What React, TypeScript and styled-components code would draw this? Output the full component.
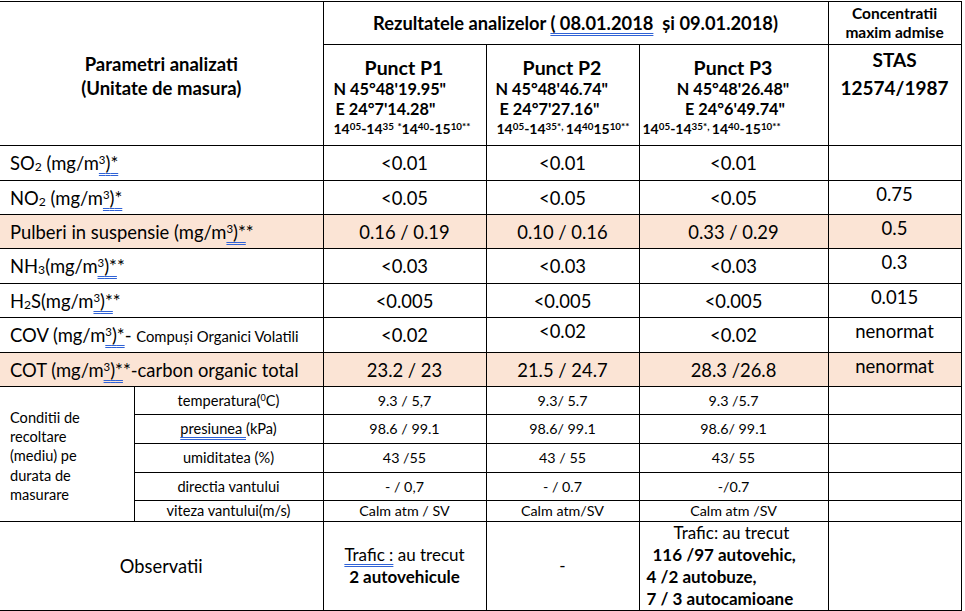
import React from "react";
import styled, { createGlobalStyle } from "styled-components";

const Global = createGlobalStyle`
  html, body { margin: 0; padding: 0; background: #fff; }
  body { font-family: Lato, "Open Sans", sans-serif; color: #000; }
`;

const Table = styled.table`
  border-collapse: collapse;
  table-layout: fixed;
  width: 961px;
  margin-top: 1px;
  font-family: Lato, "Open Sans", sans-serif;
  color: #000;
`;

const Row = styled.tr<{ $h: number }>`
  height: ${(p) => p.$h}px;
`;

type CellProps = {
  $align?: "left" | "center" | "right";
  $valign?: "top" | "middle" | "bottom";
  $bg?: boolean;
  $size?: number;
  $bold?: boolean;
  $pt?: number;
  $pl?: number;
  $first?: boolean;
  $lh?: number;
};

const Cell = styled.td<CellProps>`
  border: 1px solid #000;
  ${(p) => (p.$first ? "border-left: none;" : "")}
  padding: ${(p) => p.$pt ?? 0}px 2px 0 ${(p) => p.$pl ?? 2}px;
  text-align: ${(p) => p.$align ?? "center"};
  vertical-align: ${(p) => p.$valign ?? "middle"};
  background: ${(p) => (p.$bg ? "#fbe4d5" : "#fff")};
  font-size: ${(p) => p.$size ?? 18.4}px;
  font-weight: ${(p) => (p.$bold ? 700 : 400)};
  line-height: ${(p) => p.$lh ?? 20}px;
  white-space: nowrap;
  overflow: visible;
`;

const Line = styled.div<{ $align?: string; $indent?: number; $size?: number; $lh?: number; $bold?: boolean }>`
  text-align: ${(p) => p.$align ?? "center"};
  padding-left: ${(p) => p.$indent ?? 0}px;
  font-size: ${(p) => (p.$size ? `${p.$size}px` : "inherit")};
  line-height: ${(p) => (p.$lh ? `${p.$lh}px` : "inherit")};
  font-weight: ${(p) => (p.$bold ? 700 : "inherit")};
`;

const Spell = styled.span`
  text-decoration: underline double #2f62d6;
  text-decoration-thickness: 1px;
  text-underline-offset: 3px;
`;

const Sup = styled.sup`
  font-size: 0.62em;
  vertical-align: 0.55em;
  line-height: 0;
`;

const TimeSup = styled.sup`
  font-size: 0.7em;
  vertical-align: 0.45em;
  line-height: 0;
`;

const Sub = styled.sub`
  font-size: 0.66em;
  vertical-align: -0.12em;
  line-height: 0;
`;

const Small = styled.span`
  font-size: 14.8px;
`;

const M3 = ({ tail }: { tail: string }) => (
  <>
    (mg/m<Spell><Sup>3</Sup>){tail.slice(0, 1)}</Spell>
    {tail.slice(1)}
  </>
);

type DataRow = {
  label: React.ReactNode;
  p1: string;
  p2: string;
  p3: string;
  max: string;
  bg?: boolean;
  h: number;
  p2top?: boolean;
};

const dataRows: DataRow[] = [
  { label: <>SO<Sub>2</Sub> <M3 tail="*" /></>, p1: "<0.01", p2: "<0.01", p3: "<0.01", max: "", h: 35 },
  { label: <>NO<Sub>2</Sub> <M3 tail="*" /></>, p1: "<0.05", p2: "<0.05", p3: "<0.05", max: "0.75", h: 34 },
  { label: <>Pulberi in suspensie <M3 tail="**" /></>, p1: "0.16 / 0.19", p2: "0.10 / 0.16", p3: "0.33 / 0.29", max: "0.5", bg: true, h: 34 },
  { label: <>NH<Sub>3</Sub><M3 tail="**" /></>, p1: "<0.03", p2: "<0.03", p3: "<0.03", max: "0.3", h: 35 },
  { label: <>H<Sub>2</Sub>S<M3 tail="**" /></>, p1: "<0.005", p2: "<0.005", p3: "<0.005", max: "0.015", h: 34 },
  { label: <>COV <M3 tail="*-" /> <Small>Compuși Organici Volatili</Small></>, p1: "<0.02", p2: "<0.02", p3: "<0.02", max: "nenormat", h: 35, p2top: true },
  { label: <>COT <M3 tail="**-carbon organic total" /></>, p1: "23.2 / 23", p2: "21.5 / 24.7", p3: "28.3 /26.8", max: "nenormat", bg: true, h: 34 },
];

type CondRow = { label: React.ReactNode; p1: string; p2: string; p3: string; h: number };

const condRows: CondRow[] = [
  { label: <>temperatura(<Sup>0</Sup>C)</>, p1: "9.3 / 5,7", p2: "9.3/ 5.7", p3: "9.3 /5.7", h: 28 },
  { label: <><Spell>presiunea </Spell> (kPa)</>, p1: "98.6 / 99.1", p2: "98.6/ 99.1", p3: "98.6/ 99.1", h: 29 },
  { label: <>umiditatea (%)</>, p1: "43 /55", p2: "43 / 55", p3: "43/ 55", h: 29 },
  { label: <>directia vantului</>, p1: "- / 0,7", p2: "- / 0.7", p3: "-/0.7", h: 28 },
  { label: <>viteza vantului(m/s)</>, p1: "Calm atm / SV", p2: "Calm atm/SV", p3: "Calm atm /SV", h: 21 },
];

const Times = ({ dash, sep }: { dash: boolean; sep: string }) => (
  <>
    14<TimeSup>05</TimeSup>-14<TimeSup>35</TimeSup>
    <TimeSup>{sep}</TimeSup>14<TimeSup>40</TimeSup>
    {dash ? "-" : ""}15<TimeSup>10**</TimeSup>
  </>
);

const points = [
  {
    name: "Punct P1",
    n: "N 45°48'19.95\"",
    e: "E 24°7'14.28\"",
    times: (
      <>
        14<TimeSup>05</TimeSup>-14<TimeSup>35</TimeSup> <TimeSup>*</TimeSup>14<TimeSup>40</TimeSup>-15<TimeSup>10**</TimeSup>
      </>
    ),
    align: "left",
    nIndent: 9,
    eIndent: 11,
    tIndent: 9,
  },
  {
    name: "Punct P2",
    n: "N 45°48'46.74\"",
    e: "E 24°7'27.16\"",
    times: <Times dash={false} sep="*, " />,
    align: "left",
    nIndent: 8,
    eIndent: 12,
    tIndent: 9,
  },
  {
    name: "Punct P3",
    n: "N 45°48'26.48\"",
    e: "E 24°6'49.74\"",
    times: <Times dash={true} sep="*, " />,
    align: "center",
    nIndent: 0,
    eIndent: 4,
    tIndent: 2,
  },
];

export default function App() {
  return (
    <>
      <Global />
      <Table>
        <colgroup>
          <col style={{ width: 134 }} />
          <col style={{ width: 189 }} />
          <col style={{ width: 163 }} />
          <col style={{ width: 153 }} />
          <col style={{ width: 189 }} />
          <col style={{ width: 133 }} />
        </colgroup>
        <tbody>
          <Row $h={43}>
            <Cell rowSpan={2} colSpan={2} $first $bold $size={18.5} $lh={24} $pt={4}>
              Parametri analizati
              <br />
              (Unitate de masura)
            </Cell>
            <Cell colSpan={3} $bold $size={18.3}>
              Rezultatele analizelor <Spell>( 08.01.2018</Spell>&nbsp; și 09.01.2018)
            </Cell>
            <Cell $bold $size={15.5} $lh={19}>
              Concentratii
              <br />
              maxim admise
            </Cell>
          </Row>
          <Row $h={101}>
            {points.map((p) => (
              <Cell key={p.name} $bold $valign="top" $pt={11} $pl={1} $size={16.3}>
                <Line $size={19.5} $lh={23}>{p.name}</Line>
                <Line $align={p.align} $indent={p.nIndent} $lh={20}>{p.n}</Line>
                <Line $align={p.align} $indent={p.eIndent} $lh={19.5}>{p.e}</Line>
                <Line $align="left" $indent={p.tIndent} $lh={20} $size={14}>{p.times}</Line>
              </Cell>
            ))}
            <Cell $bold $valign="top" $size={19} $lh={28} $pt={1}>
              STAS
              <br />
              12574/1987
            </Cell>
          </Row>
          {dataRows.map((r, i) => (
            <Row key={i} $h={r.h}>
              <Cell colSpan={2} $first $align="left" $pl={10} $bg={r.bg}>
                {r.label}
              </Cell>
              <Cell $bg={r.bg}>{r.p1}</Cell>
              <Cell $bg={r.bg} $valign={r.p2top ? "top" : "middle"} $pt={r.p2top ? 3 : 0}>
                {r.p2}
              </Cell>
              <Cell $bg={r.bg}>{r.p3}</Cell>
              <Cell $bg={r.bg} $valign="top" $pt={3} $size={18.5}>
                {r.max}
              </Cell>
            </Row>
          ))}
          {condRows.map((r, i) => (
            <Row key={`c${i}`} $h={r.h}>
              {i === 0 && (
                <Cell rowSpan={5} $first $align="left" $pl={10} $size={14.6} $lh={19.3} $pt={4}>
                  Conditii de
                  <br />
                  recoltare
                  <br />
                  (mediu) pe
                  <br />
                  durata de
                  <br />
                  masurare
                </Cell>
              )}
              <Cell $size={14.6} $lh={18}>{r.label}</Cell>
              <Cell $size={14.3} $lh={18}>{r.p1}</Cell>
              <Cell $size={14.3} $lh={18}>{r.p2}</Cell>
              <Cell $size={14.3} $lh={18}>{r.p3}</Cell>
              <Cell />
            </Row>
          ))}
          <Row $h={89}>
            <Cell colSpan={2} $first $size={18.3}>
              Observatii
            </Cell>
            <Cell $size={17} $lh={22}>
              <Spell>Trafic :</Spell> au trecut
              <br />
              <b>2 autovehicule</b>
            </Cell>
            <Cell $size={17}>-</Cell>
            <Cell $size={17} $lh={22} $align="left" $pl={7}>
              <Line $align="left" $indent={27}>Trafic: au trecut</Line>
              <Line $align="left" $indent={6} $bold>116 /97 autovehic,</Line>
              <Line $align="left" $bold>4 /2 autobuze,</Line>
              <Line $align="left" $bold>7 / 3 autocamioane</Line>
            </Cell>
            <Cell />
          </Row>
        </tbody>
      </Table>
    </>
  );
}
